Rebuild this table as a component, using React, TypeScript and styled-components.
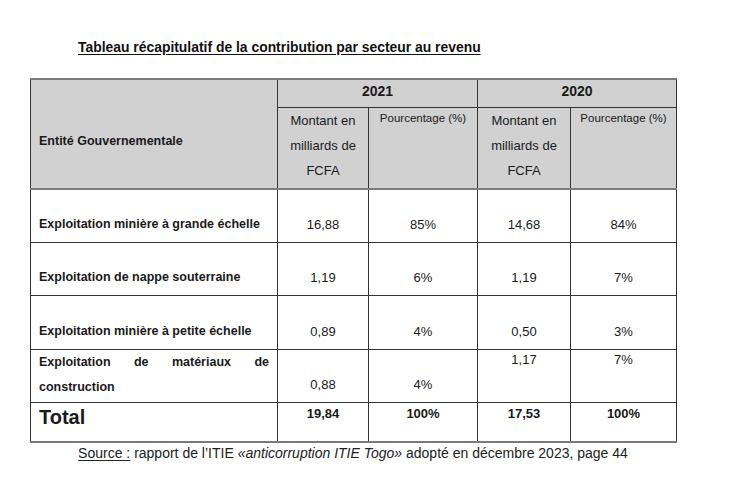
import React from 'react';
import styled, { createGlobalStyle } from 'styled-components';

const GlobalStyle = createGlobalStyle`
  html, body {
    margin: 0;
    padding: 0;
    background: #ffffff;
  }
  body {
    font-family: 'Liberation Sans', Arial, sans-serif;
    color: #1a1a1a;
  }
`;

const Page = styled.div`
  width: 741px;
  height: 486px;
  padding: 39px 0 0 30px;
  box-sizing: border-box;
  overflow: hidden;
`;

const Title = styled.h1`
  margin: 0 0 23px 48px;
  font-size: 13.9px;
  line-height: 16px;
  font-weight: 700;
  text-decoration: underline;
  text-underline-offset: 2px;
  color: #111;
`;

const Table = styled.table`
  border-collapse: collapse;
  table-layout: fixed;
  width: 646px;
  border-top: 2px solid #7a7a7a;
  border-bottom: 2px solid #7a7a7a;
  border-left: 1px solid #333;
  border-right: 1px solid #666;
`;

const HeadCell = styled.th<{ $small?: boolean }>`
  background: #d1d1d1;
  border: 1px solid #333;
  padding: 0 4px;
  text-align: center;
  vertical-align: top;
  font-weight: 400;
  font-size: ${(p) => (p.$small ? '11.5px' : '13px')};
  line-height: ${(p) => (p.$small ? '20px' : '25px')};
  color: #1a1a1a;
`;

const YearCell = styled(HeadCell)`
  font-weight: 700;
  font-size: 14px;
  line-height: 22px;
  padding-top: 0;
  vertical-align: top;
  height: 27px;
`;

const EntityCell = styled(HeadCell)`
  font-weight: 700;
  font-size: 12.5px;
  text-align: left;
  padding: 53px 8px 0;
  line-height: 16px;
`;

const HeaderBottom = styled.tr`
  height: 81px;
  border-bottom: 2px solid #7a7a7a;
`;

const Row = styled.tr<{ $h: number }>`
  height: ${(p) => p.$h}px;
`;

const Label = styled.td<{ $tight?: boolean }>`
  border: 1px solid #333;
  padding: ${(p) => (p.$tight ? '0 8px 2px' : '0 8px 5px')};
  vertical-align: bottom;
  font-weight: 700;
  font-size: 12.5px;
  line-height: 25px;
  text-align: justify;
  text-align-last: left;
`;

const Value = styled.td<{ $top?: boolean }>`
  border: 1px solid #333;
  padding: ${(p) => (p.$top ? '0 4px' : '0 4px 5px')};
  vertical-align: ${(p) => (p.$top ? 'top' : 'bottom')};
  text-align: center;
  font-size: 13px;
  line-height: ${(p) => (p.$top ? '20px' : '25px')};
`;

const TotalLabel = styled.td`
  border: 1px solid #333;
  padding: 0 8px;
  vertical-align: top;
  font-weight: 700;
  font-size: 20px;
  line-height: 28px;
`;

const TotalValue = styled.td`
  border: 1px solid #333;
  padding: 0 4px;
  vertical-align: top;
  text-align: center;
  font-size: 13px;
  font-weight: 700;
  line-height: 22px;
`;

const Caption = styled.p`
  width: 646px;
  margin: 0;
  text-align: center;
  font-size: 14px;
  line-height: 20px;
  color: #222;
`;

const SourceTag = styled.span`
  text-decoration: underline;
  text-underline-offset: 2px;
`;

const rows = [
  { label: 'Exploitation minière à grande échelle', a: '16,88', b: '85%', c: '14,68', d: '84%', h: 54 },
  { label: 'Exploitation de nappe souterraine', a: '1,19', b: '6%', c: '1,19', d: '7%', h: 53 },
  { label: 'Exploitation minière à petite échelle', a: '0,89', b: '4%', c: '0,50', d: '3%', h: 54 },
];

const Amount = () => (
  <>
    Montant en
    <br />
    milliards de
    <br />
    FCFA
  </>
);

export default function App() {
  return (
    <Page>
      <GlobalStyle />
      <Title>Tableau récapitulatif de la contribution par secteur au revenu</Title>
      <Table>
        <colgroup>
          <col style={{ width: 247 }} />
          <col style={{ width: 91 }} />
          <col style={{ width: 109 }} />
          <col style={{ width: 93 }} />
          <col style={{ width: 106 }} />
        </colgroup>
        <thead>
          <tr>
            <EntityCell rowSpan={2}>Entité Gouvernementale</EntityCell>
            <YearCell colSpan={2}>2021</YearCell>
            <YearCell colSpan={2}>2020</YearCell>
          </tr>
          <HeaderBottom>
            <HeadCell>
              <Amount />
            </HeadCell>
            <HeadCell $small>Pourcentage (%)</HeadCell>
            <HeadCell>
              <Amount />
            </HeadCell>
            <HeadCell $small>Pourcentage (%)</HeadCell>
          </HeaderBottom>
        </thead>
        <tbody>
          {rows.map((r) => (
            <Row key={r.label} $h={r.h}>
              <Label>{r.label}</Label>
              <Value>{r.a}</Value>
              <Value>{r.b}</Value>
              <Value>{r.c}</Value>
              <Value>{r.d}</Value>
            </Row>
          ))}
          <Row $h={53}>
            <Label $tight>Exploitation de matériaux de construction</Label>
            <Value>0,88</Value>
            <Value>4%</Value>
            <Value $top>1,17</Value>
            <Value $top>7%</Value>
          </Row>
          <Row $h={39}>
            <TotalLabel>Total</TotalLabel>
            <TotalValue>19,84</TotalValue>
            <TotalValue>100%</TotalValue>
            <TotalValue>17,53</TotalValue>
            <TotalValue>100%</TotalValue>
          </Row>
        </tbody>
      </Table>
      <Caption>
        <SourceTag>Source :</SourceTag> rapport de l’ITIE <i>«anticorruption ITIE Togo»</i> adopté en
        décembre 2023, page 44
      </Caption>
    </Page>
  );
}
